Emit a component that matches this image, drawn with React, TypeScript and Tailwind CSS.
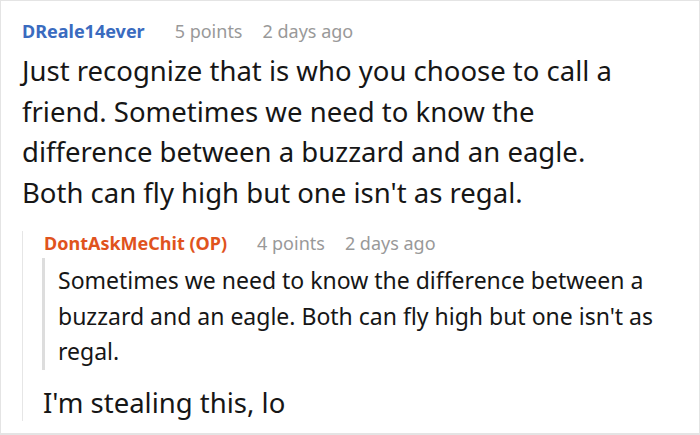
export default function App() {
  return (
    <div
      className="w-[700px] h-[435px] bg-white border border-[#e4e4e4] border-b-2 overflow-hidden"
      style={{ fontFamily: '"Noto Sans", "Open Sans", sans-serif' }}
    >
      <div className="pl-[21px] pt-[18px]">
        <div className="flex items-baseline text-[18px] leading-[24px]">
          <span className="font-bold text-[#3a6bbf]">DReale14ever</span>
          <span className="ml-[30px] text-[#999999]">5 points</span>
          <span className="ml-[20px] text-[#999999]">2 days ago</span>
        </div>
        <div className="mt-[8px] w-[625px] text-[27.5px] leading-[40.5px] text-[#161616]">
          Just recognize that is who you choose to call a friend. Sometimes we need to know the
          difference between a buzzard and an eagle. Both can fly high but one isn't as regal.
        </div>
        <div className="mt-[27px] border-l border-[#e6e6e6] pl-[19px]">
          <div className="-mt-[9px] flex items-baseline text-[18px] leading-[24px] pl-[2px]">
            <span className="font-bold text-[#e0531d]">DontAskMeChit (OP)</span>
            <span className="ml-[30px] text-[#999999]">4 points</span>
            <span className="ml-[20px] text-[#999999]">2 days ago</span>
          </div>
          <div className="mt-[3px] w-[642px] border-l-[3px] border-[#dddddd] pl-[13px] pt-[5px] text-[23px] leading-[35.5px] text-[#161616]">
            Sometimes we need to know the difference between a buzzard and an eagle. Both can fly
            high but one isn't as regal.
          </div>
          <div className="mt-[15px] -mb-[18px] pl-[1px] text-[27.5px] leading-[36px] text-[#161616]">
            I'm stealing this, lo
          </div>
        </div>
      </div>
    </div>
  );
}
